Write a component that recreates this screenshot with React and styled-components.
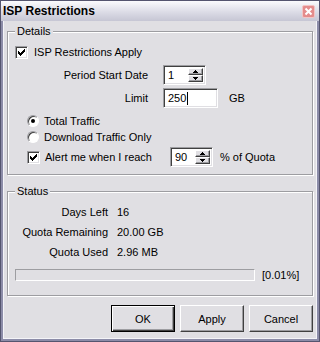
import styled, { createGlobalStyle } from 'styled-components'

const Face = '#e0dfe3'
const Shadow = '#9d9da1'
const DarkShadow = '#404040'

const GlobalStyle = createGlobalStyle`
  html, body { margin: 0; padding: 0; background: ${Face}; }
  body {
    font-family: "Liberation Sans", Arial, sans-serif;
    font-size: 11px;
    color: #000;
  }
`

const Window = styled.div`
  width: 320px;
  height: 342px;
  box-sizing: border-box;
  display: flex;
  flex-direction: column;
  background: ${Face};
  border: 1px solid #55556f;
`

const TitleBar = styled.div`
  height: 20px;
  flex: none;
  display: flex;
  align-items: center;
  justify-content: space-between;
  padding: 0 4px 0 2px;
  background: linear-gradient(#fbfbfd, #d9d9e4 60%, #c6c6d4);
  font-weight: bold;
  font-size: 12px;
`

const CloseBtn = styled.span`
  display: flex;
  width: 13px;
  height: 13px;
`

const Client = styled.div`
  flex: 1;
  display: flex;
  flex-direction: column;
  border: 2px solid #8c8ca8;
  border-top: none;
  box-shadow: inset 1px 0 0 #f4f4f8, inset -1px 0 0 #f4f4f8, inset 0 -1px 0 #f4f4f8;
`

const Group = styled.fieldset`
  margin: ${p => p.$top}px 4px 0;
  padding: ${p => p.$pt}px 7px ${p => p.$pb}px;
  border: 1px solid ${Shadow};
  box-shadow: inset 1px 1px 0 #fff, 1px 1px 0 #fff;
  min-width: 0;
  display: flex;
  flex-direction: column;
`

const Legend = styled.legend`
  padding: 0 2px;
  line-height: 13px;
  background: ${Face};
`

const Row = styled.div`
  display: flex;
  align-items: center;
  height: ${p => p.$h || 16}px;
  margin-top: ${p => p.$mt || 0}px;
  padding-left: ${p => p.$indent || 0}px;
  gap: ${p => p.$gap || 0}px;
  white-space: nowrap;
`

const Lead = styled.div`
  width: 148px;
  flex: none;
  display: flex;
  align-items: center;
  justify-content: ${p => (p.$right ? 'flex-end' : 'flex-start')};
  padding: ${p => (p.$right ? '0 15px 0 0' : '0 0 0 12px')};
  box-sizing: border-box;
  gap: 5px;
`

const Check = styled.span`
  width: 13px;
  height: 13px;
  box-sizing: border-box;
  flex: none;
  display: inline-flex;
  align-items: center;
  justify-content: center;
  background: #fff;
  border: 1px solid;
  border-color: ${Shadow} #fff #fff ${Shadow};
  box-shadow: inset 1px 1px 0 ${DarkShadow}, inset -1px -1px 0 ${Face};
`

const Radio = styled.span`
  width: 12px;
  height: 12px;
  box-sizing: border-box;
  flex: none;
  border-radius: 50%;
  display: inline-flex;
  align-items: center;
  justify-content: center;
  background: #fff;
  border: 1px solid;
  border-color: ${Shadow} #fff #fff ${Shadow};
  box-shadow: inset 1px 1px 0 ${DarkShadow};
`

const Dot = styled.span`
  width: 4px;
  height: 4px;
  border-radius: 50%;
  background: #000;
`

const Field = styled.div`
  width: ${p => p.$w}px;
  height: 20px;
  box-sizing: border-box;
  flex: none;
  display: flex;
  align-items: center;
  background: #fff;
  border: 1px solid;
  border-color: ${Shadow} #fff #fff ${Shadow};
  box-shadow: inset 1px 1px 0 ${DarkShadow}, inset -1px -1px 0 ${Face};
  padding: 2px 2px 2px 4px;
`

const FieldText = styled.span`
  flex: 1;
  display: flex;
  align-items: center;
`

const Caret = styled.span`
  width: 1px;
  height: 13px;
  background: #000;
  margin-left: 1px;
`

const SpinButtons = styled.div`
  width: 15px;
  height: 100%;
  display: flex;
  flex-direction: column;
`

const SpinBtn = styled.span`
  flex: 1;
  box-sizing: border-box;
  display: flex;
  align-items: center;
  justify-content: center;
  background: ${Face};
  border: 1px solid;
  border-color: #fff ${DarkShadow} ${DarkShadow} #fff;
  box-shadow: inset -1px -1px 0 ${Shadow};
`

const Label = styled.span`
  width: 93px;
  flex: none;
  text-align: right;
  margin-right: 9px;
`

const Progress = styled.div`
  width: 240px;
  height: 12px;
  box-sizing: border-box;
  flex: none;
  border: 1px solid;
  border-color: ${Shadow} #fff #fff ${Shadow};
  margin-right: 7px;
`

const ButtonRow = styled.div`
  display: flex;
  justify-content: flex-end;
  gap: 5px;
  margin-top: 9px;
  padding-right: 4px;
`

const Button = styled.button`
  width: 64px;
  height: 27px;
  box-sizing: border-box;
  padding: 0;
  font: 11px "Liberation Sans", Arial, sans-serif;
  color: #000;
  background: ${Face};
  border: 1px solid;
  border-color: ${p => (p.$default ? '#000' : `#fff ${DarkShadow} ${DarkShadow} #fff`)};
  box-shadow: ${p =>
    p.$default
      ? `inset 1px 1px 0 #fff, inset -1px -1px 0 ${DarkShadow}, inset -2px -2px 0 ${Shadow}`
      : `inset -1px -1px 0 ${Shadow}`};
`

const Arrow = ({ up }) => (
  <svg width="5" height="3" viewBox="0 0 5 3" shapeRendering="crispEdges">
    {up ? (
      <path d="M2 0h1v1h1v1h1v1H0V2h1V1h1z" fill="#000" />
    ) : (
      <path d="M0 0h5v1H4v1H3v1H2V2H1V1H0z" fill="#000" />
    )}
  </svg>
)

const Tick = () => (
  <svg width="7" height="7" viewBox="0 0 7 7" shapeRendering="crispEdges">
    <path
      d="M0 2h1v3H0zM1 3h1v3H1zM2 4h1v3H2zM3 3h1v3H3zM4 2h1v3H4zM5 1h1v3H5zM6 0h1v3H6z"
      fill="#000"
    />
  </svg>
)

const CheckBox = ({ checked }) => <Check>{checked && <Tick />}</Check>

const RadioButton = ({ checked }) => <Radio>{checked && <Dot />}</Radio>

const SpinBox = ({ value }) => (
  <Field $w={43}>
    <FieldText>{value}</FieldText>
    <SpinButtons>
      <SpinBtn>
        <Arrow up />
      </SpinBtn>
      <SpinBtn>
        <Arrow />
      </SpinBtn>
    </SpinButtons>
  </Field>
)

const stats = [
  ['Days Left', '16'],
  ['Quota Remaining', '20.00 GB'],
  ['Quota Used', '2.96 MB'],
]

const App = () => {
  return (
    <>
      <GlobalStyle />
      <Window>
        <TitleBar>
          ISP Restrictions
          <CloseBtn>
            <svg width="13" height="13" viewBox="0 0 13 13">
              <rect x="0.5" y="0.5" width="12" height="12" rx="1.5" fill="#e48c8c" stroke="#f3c4c4" />
              <path d="M3.5 3.5l6 6M9.5 3.5l-6 6" stroke="#fff" strokeWidth="2" />
            </svg>
          </CloseBtn>
        </TitleBar>
        <Client>
          <Group $top={4} $pt={6} $pb={7}>
            <Legend>Details</Legend>
            <Row $gap={6}>
              <CheckBox checked />
              ISP Restrictions Apply
            </Row>
            <Row $h={20} $mt={5}>
              <Lead $right>Period Start Date</Lead>
              <SpinBox value="1" />
            </Row>
            <Row $h={20} $mt={3}>
              <Lead $right>Limit</Lead>
              <Field $w={55}>
                <FieldText>
                  250
                  <Caret />
                </FieldText>
              </Field>
              <span style={{ marginLeft: 11 }}>GB</span>
            </Row>
            <Row $mt={5} $indent={12} $gap={5}>
              <RadioButton checked />
              Total Traffic
            </Row>
            <Row $indent={12} $gap={5}>
              <RadioButton />
              Download Traffic Only
            </Row>
            <Row $h={20} $mt={2} $gap={7}>
              <Lead>
                <CheckBox checked />
                Alert me when I reach
              </Lead>
              <SpinBox value="90" />
              % of Quota
            </Row>
          </Group>

          <Group $top={10} $pt={4} $pb={13}>
            <Legend>Status</Legend>
            {stats.map(([label, value]) => (
              <Row key={label} $h={20}>
                <Label>{label}</Label>
                {value}
              </Row>
            ))}
            <Row $h={14} $mt={6}>
              <Progress />
              [0.01%]
            </Row>
          </Group>

          <ButtonRow>
            <Button $default>OK</Button>
            <Button>Apply</Button>
            <Button>Cancel</Button>
          </ButtonRow>
        </Client>
      </Window>
    </>
  )
}

export default App
